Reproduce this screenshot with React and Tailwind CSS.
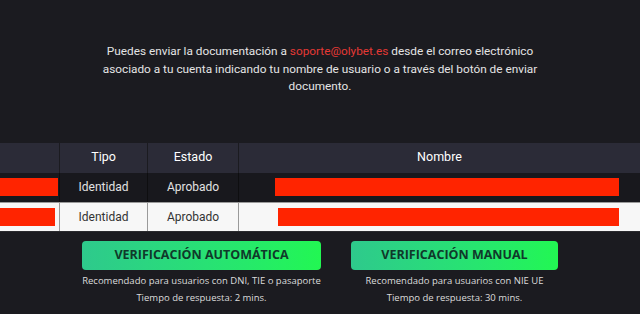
export default function App() {
  const filas = [
    {
      fondo: "bg-[#18181d] text-[#e2e2e2]",
      borde: "border-[#0e0e10]",
      rojoIzq: "w-[58px]",
      rojoDer: "ml-[36px] w-[344px]",
      arriba: "",
    },
    {
      fondo: "bg-[#f7f7f7] text-[#333333]",
      borde: "border-[#9a9a9a]",
      rojoIzq: "w-[55px]",
      rojoDer: "ml-[39px] w-[341px]",
      arriba: "border-t border-[#9a9a9a]",
    },
  ]

  return (
    <div className="h-[314px] w-[640px] overflow-hidden bg-[#1b1b20] [font-family:Roboto,sans-serif]">
      <p className="mx-auto w-[450px] pt-[43px] text-center text-[11.8px] leading-[17.5px] text-[#e4e4e4]">
        Puedes enviar la documentación a{" "}
        <span className="text-[#e53935]">soporte@olybet.es</span> desde el correo electrónico
        asociado a tu cuenta indicando tu nombre de usuario o a través del botón de enviar
        documento.
      </p>

      <div className="mt-[47px] text-[12px]">
        <div className="grid h-[30px] grid-cols-[60px_88px_91px_1fr] bg-[#2b2b37] text-[12.5px] text-white">
          <div className="border-r border-[#1b1b20]" />
          <div className="flex items-center justify-center border-r border-[#1b1b20]">Tipo</div>
          <div className="flex items-center justify-center border-r border-[#1b1b20]">Estado</div>
          <div className="flex items-center justify-center">Nombre</div>
        </div>

        {filas.map((f, i) => (
          <div key={i} className={`grid h-[29px] grid-cols-[60px_88px_91px_1fr] ${f.fondo} ${f.arriba}`}>
            <div className={`flex items-center border-r ${f.borde}`}>
              <div className={`h-[18px] bg-[#ff2400] ${f.rojoIzq}`} />
            </div>
            <div className={`flex items-center justify-center border-r ${f.borde}`}>Identidad</div>
            <div className={`flex items-center justify-center border-r ${f.borde}`}>Aprobado</div>
            <div className="flex items-center">
              <div className={`h-[18px] bg-[#ff2400] ${f.rojoDer}`} />
            </div>
          </div>
        ))}
        <div className="h-[1px] bg-[#2a2a2e]" />
      </div>

      <div className="mt-[9px] flex justify-center gap-[30px] [font-family:'Open_Sans',sans-serif]">
        <div className="flex w-[239px] flex-col items-center">
          <button className="h-[29px] w-full rounded-[4px] bg-gradient-to-r from-[#2ec98c] to-[#22f752] text-[12.5px] font-bold text-[#10392a]">
            VERIFICACIÓN AUTOMÁTICA
          </button>
          <div className="mt-[2px] text-center text-[9.5px] leading-[17px] whitespace-nowrap text-[#dcdcdc]">
            <div>Recomendado para usuarios con DNI, TIE o pasaporte</div>
            <div>Tiempo de respuesta: 2 mins.</div>
          </div>
        </div>
        <div className="flex w-[207px] flex-col items-center">
          <button className="h-[29px] w-full rounded-[4px] bg-gradient-to-r from-[#2ec98c] to-[#22f752] text-[12.5px] font-bold text-[#10392a]">
            VERIFICACIÓN MANUAL
          </button>
          <div className="mt-[2px] text-center text-[9.5px] leading-[17px] whitespace-nowrap text-[#dcdcdc]">
            <div>Recomendado para usuarios con NIE UE</div>
            <div>Tiempo de respuesta: 30 mins.</div>
          </div>
        </div>
      </div>
    </div>
  )
}
